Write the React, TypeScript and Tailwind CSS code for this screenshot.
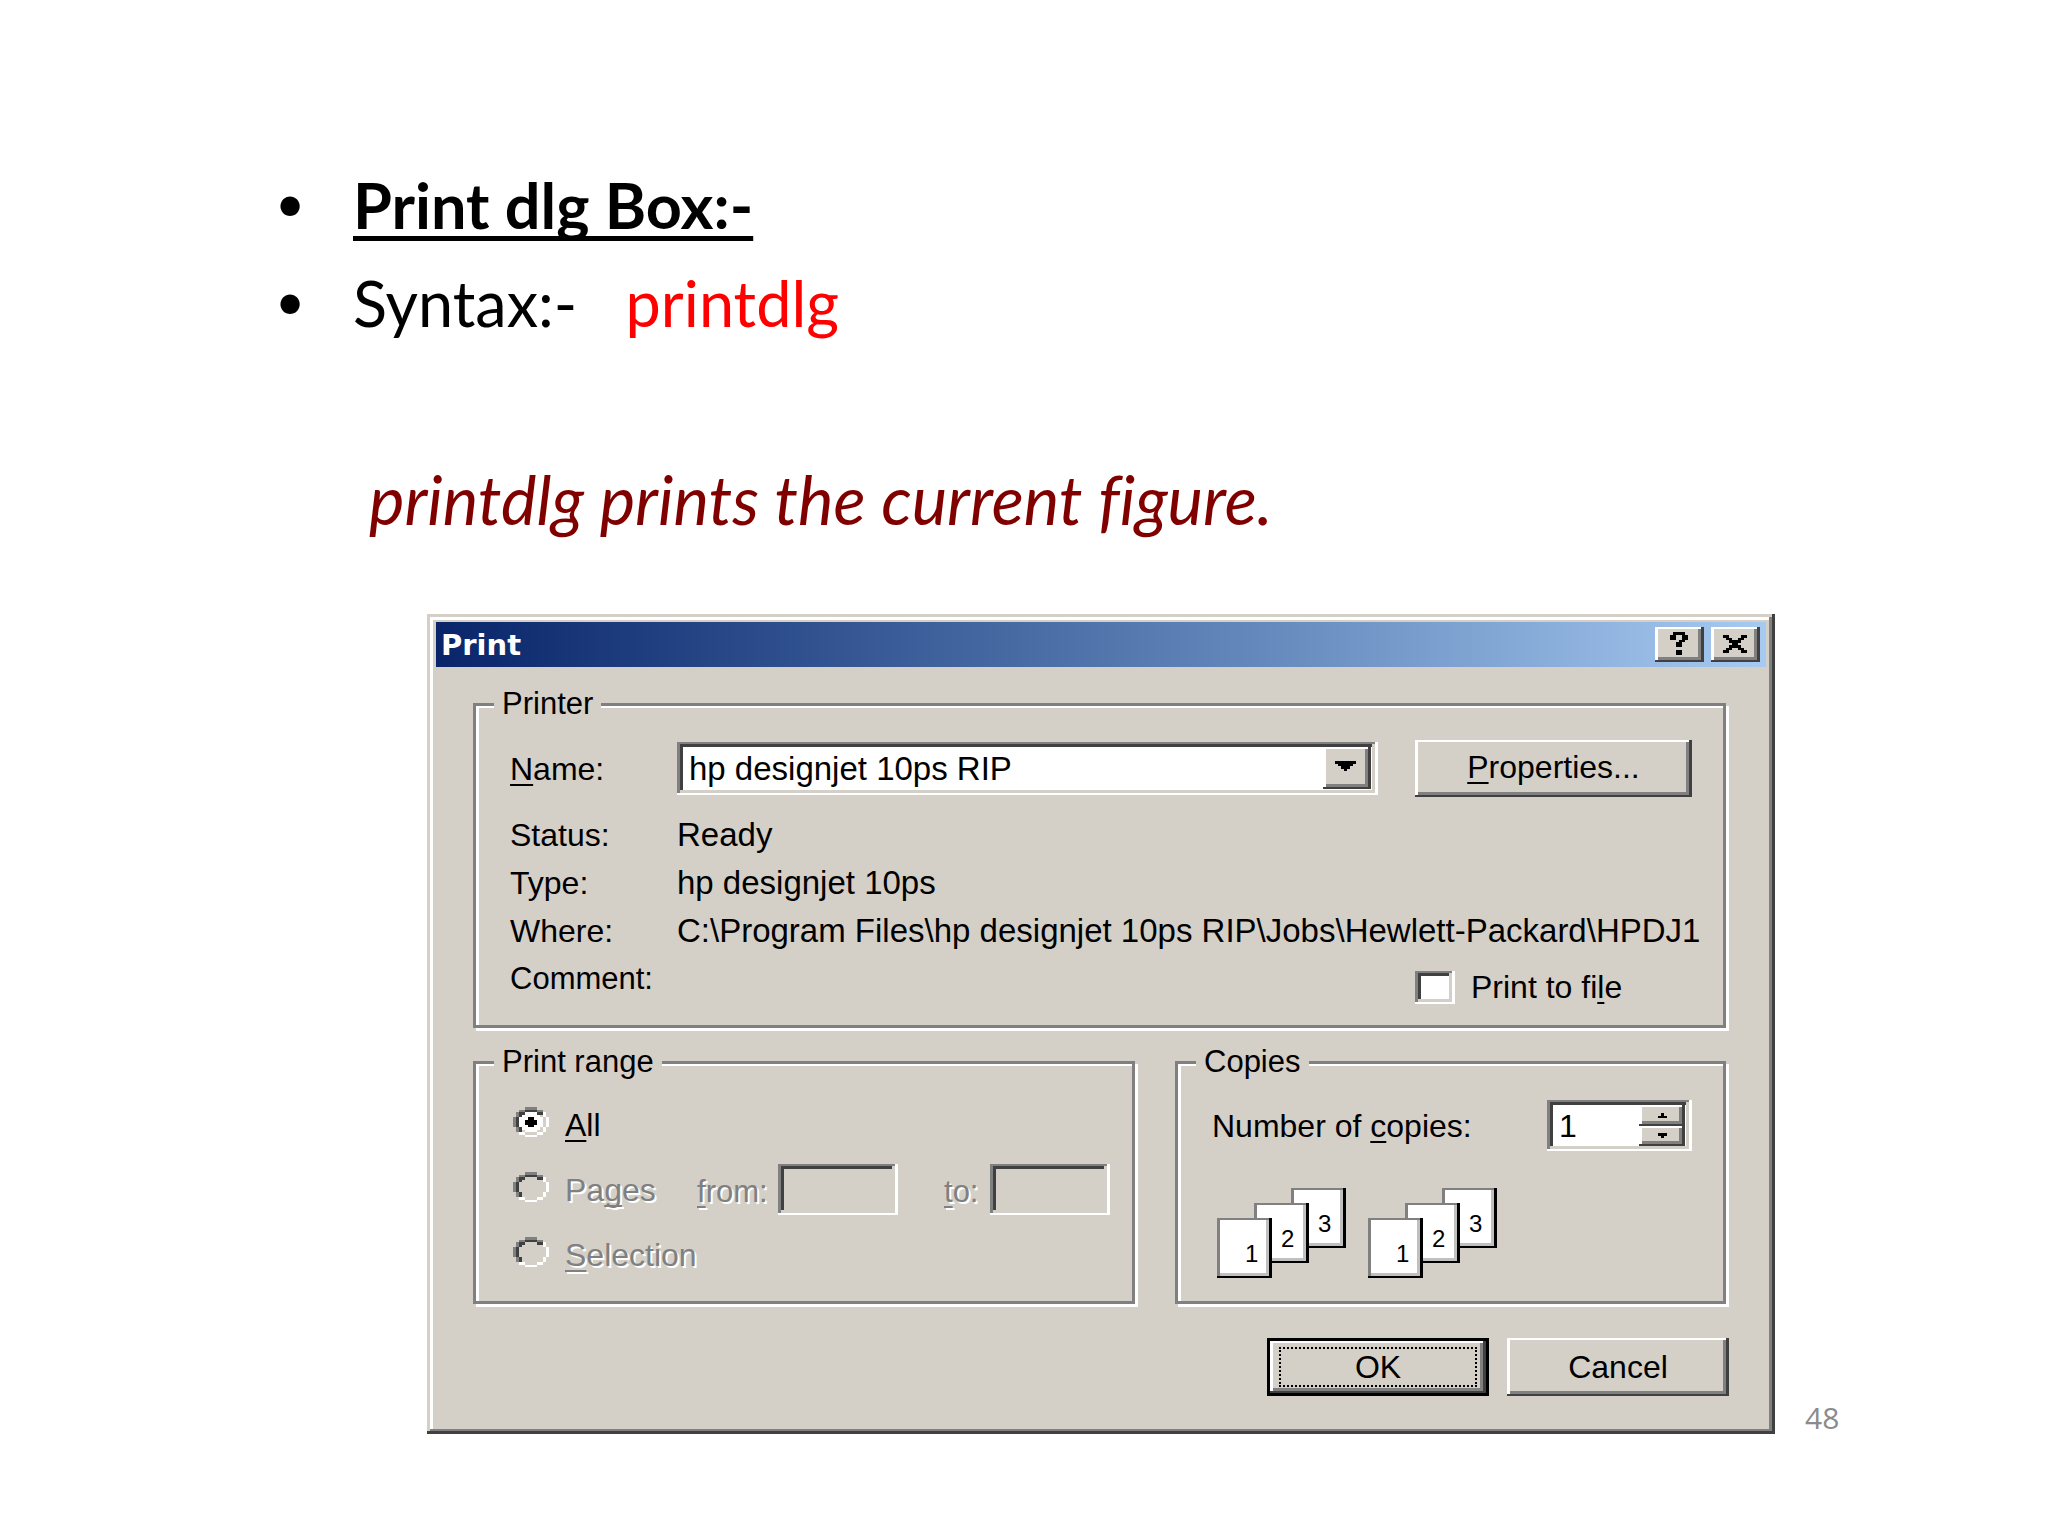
import type { ReactNode } from "react";

// One cell per character; "." is left empty.
const COLORS: Record<string, string> = {
  k: "#000000",
  d: "#404040",
  g: "#808080",
  l: "#d4d0c8",
  w: "#ffffff",
};

const RADIO = [
  "....gggg....",
  "..ggddddgg..",
  ".gddiiiiddw.",
  ".gdiiiiiilw.",
  "gdiiiooiiilw",
  "gdiiooooiilw",
  "gdiiooooiilw",
  "gdiiiooiiilw",
  ".gdiiiiiilw.",
  ".gdliiiillw.",
  "..wwllllww..",
  "....wwww....",
];
const RADIO_ON = RADIO.map((r) => r.replace(/i/g, "w").replace(/o/g, "k"));
const RADIO_OFF = RADIO.map((r) => r.replace(/[io]/g, "l"));

const HELP = [".kkkk.", "kk..kk", "kk..kk", "...kk.", "..kk..", "..kk..", "......", "..kk..", "..kk.."];
const CLOSE = ["kk....kk", ".kk..kk.", "..kkkk..", "...kk...", "..kkkk..", ".kk..kk.", "kk....kk"];
const DOWN = ["kkkkkkk", ".kkkkk.", "..kkk..", "...k..."];
const SMALL_UP = [".k.", "kkk"];
const SMALL_DOWN = ["kkk", ".k."];

function Bitmap({ rows, className }: { rows: string[]; className: string }) {
  return (
    <svg
      viewBox={`0 0 ${rows[0].length} ${rows.length}`}
      preserveAspectRatio="none"
      shapeRendering="crispEdges"
      className={className}
      aria-hidden="true"
    >
      {rows.flatMap((row, y) =>
        [...row].map((c, x) =>
          c === "." ? null : <rect key={`${x}-${y}`} x={x} y={y} width="1" height="1" fill={COLORS[c]} />
        )
      )}
    </svg>
  );
}

const raised =
  "bg-[#d4d0c8] shadow-[inset_-3px_-2px_#404040,inset_3px_2px_#fff,inset_-6px_-5px_#808080]";
const sunken =
  "shadow-[inset_-3px_-2px_#fff,inset_3px_2px_#808080,inset_-6px_-5px_#d4d0c8,inset_6px_5px_#404040]";
const disabledText = "text-[#808080] [text-shadow:2px_2px_0_#fff]";

function Key({ children }: { children: ReactNode }) {
  return <u className="decoration-2 underline-offset-4 [text-decoration-skip-ink:none]">{children}</u>;
}

function Group({ title, className, children }: { title: string; className: string; children: ReactNode }) {
  return (
    <fieldset
      className={`mr-[3px] min-w-0 border-3 border-[#808080] shadow-[inset_3px_2px_#fff,3px_3px_#fff] ${className}`}
    >
      <legend className="-ml-4 h-9 bg-[#d4d0c8] px-2 text-[31px] leading-9">{title}</legend>
      {children}
    </fieldset>
  );
}

function Radio({ id, checked, disabled, children }: { id: string; checked?: boolean; disabled?: boolean; children: ReactNode }) {
  return (
    <label htmlFor={id} className="flex w-[184px] items-center gap-4">
      <span className="relative h-9 w-9">
        <Bitmap rows={checked ? RADIO_ON : RADIO_OFF} className="h-[30px] w-9" />
        <input
          id={id}
          type="radio"
          name="range"
          defaultChecked={checked}
          disabled={disabled}
          className="absolute inset-0 appearance-none"
        />
      </span>
      <span className={disabled ? disabledText : ""}>{children}</span>
    </label>
  );
}

function Sheets() {
  const sheets = [
    { n: 3, x: 74, y: 0, tx: 27 },
    { n: 2, x: 37, y: 15, tx: 27 },
    { n: 1, x: 0, y: 30, tx: 28 },
  ];
  return (
    <svg viewBox="0 0 129 90" className="h-[90px] w-[129px]" aria-hidden="true">
      {sheets.map((s) => (
        <g key={s.n} transform={`translate(${s.x} ${s.y})`}>
          <rect width="55" height="60" fill="#000" />
          <rect width="52" height="58" fill="#808080" />
          <rect x="3" y="2" width="49" height="56" fill="#c0c0c0" />
          <rect x="3" y="2" width="46" height="53" fill="#fff" />
          <text x={s.tx} y="44" fontSize="24" fontFamily="Liberation Sans, sans-serif">
            {s.n}
          </text>
        </g>
      ))}
    </svg>
  );
}

function PrintDialog() {
  return (
    <section
      aria-label="Print"
      className="min-w-0 flex-1 bg-[#d4d0c8] font-['Liberation_Sans',Arial,sans-serif] text-[32px] leading-9 text-black shadow-[inset_-3px_-3px_#404040,inset_3px_3px_#d4d0c8,inset_-6px_-5px_#808080,inset_6px_6px_#fff]"
    >
      <div className="px-[9px] pt-2">
        <div className="flex h-[45px] items-center gap-[7px] bg-linear-to-r from-[#0a246a] to-[#a6caf0] pr-1.5 pl-[5px]">
          <h2 className="flex-1 font-['DejaVu_Sans',Verdana,sans-serif] text-[29px] font-bold text-white">Print</h2>
          <button aria-label="Help" className={`flex h-[35px] w-[49px] items-center justify-center pr-0.5 pb-0.5 ${raised}`}>
            <Bitmap rows={HELP} className="h-[23px] w-[18px]" />
          </button>
          <button aria-label="Close" className={`flex h-[35px] w-[49px] items-center justify-center pr-0.5 pb-0.5 ${raised}`}>
            <Bitmap rows={CLOSE} className="h-[18px] w-6" />
          </button>
        </div>
      </div>

      <form className="px-[46px] pt-[19px] pb-[38px]">
        <Group title="Printer" className="pr-[31px] pb-3.5 pl-[34px]">
          <div className="grid grid-cols-[167px_1fr_277px] items-center pt-[18px] whitespace-nowrap">
            <label htmlFor="name">
              <Key>N</Key>ame:
            </label>
            <div className="relative mr-[37px]">
              <select
                id="name"
                className={`block h-[53px] w-full appearance-none bg-white pl-3 text-[33px] ${sunken}`}
              >
                <option>hp designjet 10ps RIP</option>
              </select>
              <span
                className={`pointer-events-none absolute top-[5px] right-[7px] flex h-[42px] w-12 items-center justify-center pr-1 pb-1 ${raised}`}
              >
                <Bitmap rows={DOWN} className="h-[10px] w-[21px]" />
              </span>
            </div>
            <button type="button" className={`h-[57px] pb-1 ${raised}`}>
              <Key>P</Key>roperties...
            </button>
          </div>

          <dl className="mt-[14px] grid grid-cols-[167px_1fr] leading-[48px] whitespace-nowrap">
            <dt>Status:</dt>
            <dd className="text-[33px]">Ready</dd>
            <dt>Type:</dt>
            <dd className="text-[33px]">hp designjet 10ps</dd>
            <dt>Where:</dt>
            <dd className="text-[33px]">C:\Program Files\hp designjet 10ps RIP\Jobs\Hewlett-Packard\HPDJ1</dd>
          </dl>
          <div className="flex h-14 justify-between leading-[48px]">
            <span className="text-[31px]">Comment:</span>
            <label htmlFor="tofile" className="flex w-[277px] items-center gap-4 self-end">
              <input id="tofile" type="checkbox" className={`h-[33px] w-10 appearance-none bg-white ${sunken}`} />
              <span>
                Print to fi<Key>l</Key>e
              </span>
            </label>
          </div>
        </Group>

        <div className="mt-4 grid grid-cols-[665fr_554fr] gap-[37px]">
          <Group title="Print range" className="pb-3.5 pl-[34px]">
            <div className="pt-3 pl-[3px] whitespace-nowrap">
              <div className="flex h-[65px] items-center">
                <Radio id="all" checked>
                  <Key>A</Key>ll
                </Radio>
              </div>
              <div className="flex h-[65px] items-center">
                <Radio id="pages" disabled>
                  Pa<Key>g</Key>es
                </Radio>
                <label htmlFor="from" className={`w-[81px] pt-1 text-[31px] ${disabledText}`}>
                  <Key>f</Key>rom:
                </label>
                <input id="from" disabled className={`h-[51px] w-[120px] bg-[#d4d0c8] px-3 ${sunken}`} />
                <label htmlFor="to" className={`ml-[46px] w-[46px] pt-1 text-[31px] ${disabledText}`}>
                  <Key>t</Key>o:
                </label>
                <input id="to" disabled className={`h-[51px] w-[120px] bg-[#d4d0c8] px-3 ${sunken}`} />
              </div>
              <div className="flex h-[65px] items-center">
                <Radio id="selection" disabled>
                  <Key>S</Key>election
                </Radio>
              </div>
            </div>
          </Group>

          <Group title="Copies" className="pr-[31px] pb-[23px] pl-[34px]">
            <div className="flex items-center justify-between pt-5">
              <label htmlFor="copies">
                Number of <Key>c</Key>opies:
              </label>
              <div className={`flex h-[51px] w-[145px] bg-white py-[5px] pr-[7px] pl-3 ${sunken}`}>
                <input id="copies" defaultValue="1" className="min-w-0 flex-1 bg-transparent leading-9 outline-none" />
                <div className="flex w-[46px] flex-col">
                  <button type="button" aria-label="More copies" className={`flex flex-1 items-center justify-center ${raised}`}>
                    <Bitmap rows={SMALL_UP} className="h-[5px] w-[9px]" />
                  </button>
                  <button type="button" aria-label="Fewer copies" className={`flex flex-1 items-center justify-center ${raised}`}>
                    <Bitmap rows={SMALL_DOWN} className="h-[5px] w-[9px]" />
                  </button>
                </div>
              </div>
            </div>
            <div className="mt-[37px] flex gap-[22px] pl-[5px]">
              <Sheets />
              <Sheets />
            </div>
          </Group>
        </div>

        <div className="mt-[34px] flex justify-end gap-[18px]">
          <button
            type="button"
            className="h-[58px] w-[222px] bg-[#d4d0c8] px-3 py-[9px] shadow-[inset_0_0_0_3px_#000,inset_-6px_-5px_#404040,inset_6px_5px_#fff,inset_-9px_-8px_#808080]"
          >
            <span className="flex h-full items-center justify-center border-2 border-dotted border-black">OK</span>
          </button>
          <button type="button" className={`h-[58px] w-[222px] ${raised}`}>
            Cancel
          </button>
        </div>
      </form>
    </section>
  );
}

export default function App() {
  return (
    <main className="min-h-screen bg-white pt-[156px] pr-[209px] pb-16 pl-[273px] font-['Lato',sans-serif] text-[63px] leading-[98px] text-black">
      <ul className="whitespace-pre">
        <li className="flex">
          <span className="w-20 pl-0.5 text-[52px] leading-[92px]">•</span>
          <strong className="underline decoration-[5px] underline-offset-[7px] [text-decoration-skip-ink:none]">
            Print dlg Box:-
          </strong>
        </li>
        <li className="flex">
          <span className="w-20 pl-0.5 text-[52px] leading-[92px]">•</span>
          <span>
            Syntax:-{"   "}
            <span className="text-[#ff0000]">printdlg</span>
          </span>
        </li>
      </ul>
      <p className="mt-[98px] pl-24 text-[67px] text-[#800000] italic [font-variant-ligatures:none]">
        printdlg prints the current figure.
      </p>

      <div className="mt-[66px] flex items-end pl-[154px]">
        <PrintDialog />
        <span className="ml-[30px] w-[34px] font-['Open_Sans',sans-serif] text-[30px] leading-8 text-[#8b8b8b]">48</span>
      </div>
    </main>
  );
}
